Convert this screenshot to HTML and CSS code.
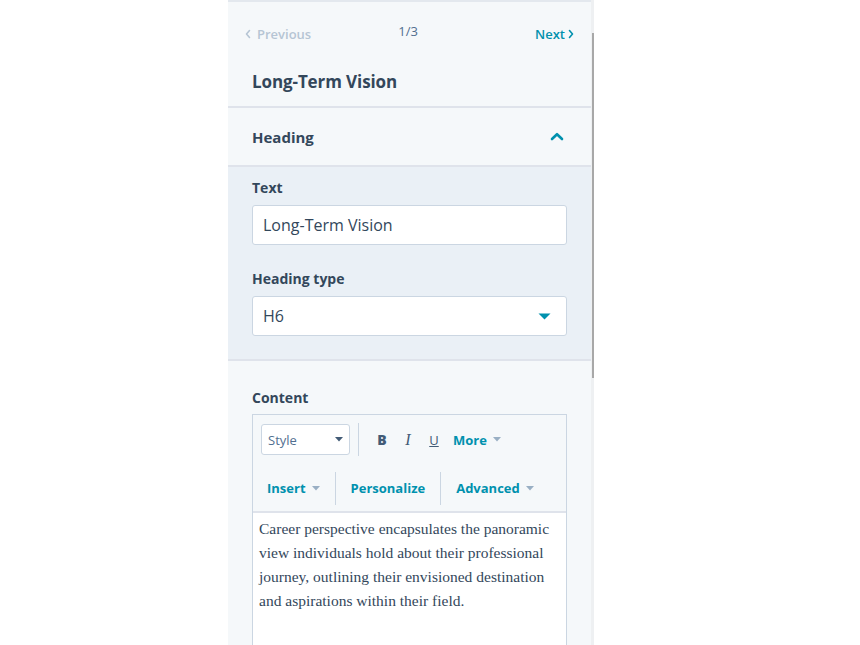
FILE: index.html
```html
<!DOCTYPE html>
<html>
<head>
<meta charset="utf-8">
<link rel="stylesheet" href="styles.css">
</head>
<body>
<div class="frame">
  <aside class="panel">
    <div class="topstrip"></div>
    <header class="head">
      <nav class="pager">
        <span class="prev"><svg width="8" height="10" viewBox="0 0 8 10"><path d="M5.5 1.5 L2.5 5 L5.5 8.5" fill="none" stroke="currentColor" stroke-width="1.6" stroke-linecap="round" stroke-linejoin="round"/></svg>Previous</span>
        <span class="count">1/3</span>
        <span class="next">Next<svg width="8" height="10" viewBox="0 0 8 10"><path d="M2.5 1.5 L5.5 5 L2.5 8.5" fill="none" stroke="currentColor" stroke-width="1.6" stroke-linecap="round" stroke-linejoin="round"/></svg></span>
      </nav>
      <h1 class="title">Long-Term Vision</h1>
    </header>
    <div class="acc-head">
      <span>Heading</span>
      <svg width="14" height="9" viewBox="0 0 14 9"><path d="M2 7 L7 2.2 L12 7" fill="none" stroke="#0091ae" stroke-width="2.6" stroke-linecap="round" stroke-linejoin="round"/></svg>
    </div>
    <div class="acc-body">
      <label class="lbl">Text</label>
      <div class="input">Long-Term Vision</div>
      <label class="lbl second">Heading type</label>
      <div class="input select">H6<svg width="13" height="7" viewBox="0 0 13 7"><path d="M0.5 0.5 H12.5 L6.5 6.5 Z" fill="#0091ae"/></svg></div>
    </div>
    <div class="content-sec">
      <label class="lbl">Content</label>
      <div class="editor">
        <div class="toolbar">
          <div class="tb-row">
            <div class="style-sel">Style<svg width="8" height="5" viewBox="0 0 8 5"><path d="M0 0 H8 L4 4.5 Z" fill="#425b76"/></svg></div>
            <span class="vsep"></span>
            <span class="fmt b">B</span>
            <span class="fmt i">I</span>
            <span class="fmt u">U</span>
            <span class="tbtn more">More<svg width="8" height="5" viewBox="0 0 8 5"><path d="M0 0 H8 L4 4.5 Z" fill="#99afc4"/></svg></span>
          </div>
          <div class="tb-row row2">
            <span class="tbtn first">Insert<svg width="8" height="5" viewBox="0 0 8 5"><path d="M0 0 H8 L4 4.5 Z" fill="#99afc4"/></svg></span>
            <span class="vsep tall"></span>
            <span class="tbtn">Personalize</span>
            <span class="vsep tall"></span>
            <span class="tbtn">Advanced<svg width="8" height="5" viewBox="0 0 8 5"><path d="M0 0 H8 L4 4.5 Z" fill="#99afc4"/></svg></span>
          </div>
        </div>
        <div class="body-text">Career perspective encapsulates the panoramic view individuals hold about their professional journey, outlining their envisioned destination and aspirations within their field.</div>
      </div>
    </div>
  </aside>
  <div class="scroll"><div class="thumb"></div></div>
</div>
</body>
</html>
```
FILE: styles.css
```css
html, body {
  margin: 0;
  padding: 0;
  background: #ffffff;
  height: 645px;
  overflow: hidden;
  font-family: "Open Sans", "Noto Sans", sans-serif;
  color: #33475b;
}
.frame {
  display: flex;
  margin-left: 228px;
  height: 645px;
}
.panel {
  width: 363px;
  background: #f5f8fa;
  display: flex;
  flex-direction: column;
  overflow: hidden;
}
.panel > * {
  flex-shrink: 0;
}
.topstrip {
  height: 2px;
  background: #e3e8ee;
}
.head {
  border-bottom: 2px solid #dfe3eb;
  padding: 0 16px 0 24px;
  height: 106px;
  box-sizing: border-box;
}
.pager {
  display: flex;
  align-items: center;
  justify-content: space-between;
  padding-top: 22px;
  height: 20px;
  font-size: 13px;
  font-weight: 600;
  margin-left: -8px;
}
.prev {
  color: #b6c5d4;
  display: flex;
  align-items: center;
  gap: 5px;
}
.count {
  color: #516f90;
  font-weight: 400;
  font-size: 13px;
  margin-top: -7px;
  margin-left: -30px;
}
.next {
  color: #0091ae;
  display: flex;
  align-items: center;
  gap: 2px;
}
.title {
  margin: 26px 0 0;
  font-size: 17px;
  font-weight: 700;
  line-height: 24px;
  letter-spacing: -0.1px;
}
.acc-head {
  height: 57px;
  border-bottom: 2px solid #dfe3eb;
  display: flex;
  align-items: center;
  justify-content: space-between;
  padding: 0 27px 0 24px;
  font-size: 15px;
  font-weight: 700;
}
.acc-body {
  background: #eaf0f6;
  padding: 11px 24px 23px;
  border-bottom: 2px solid #dfe3eb;
}
.lbl {
  display: block;
  font-size: 14px;
  font-weight: 700;
  line-height: 20px;
  margin-bottom: 7px;
}
.lbl.second {
  margin-top: 24px;
}
.input {
  background: #ffffff;
  border: 1px solid #cbd6e2;
  border-radius: 3px;
  height: 38px;
  padding: 0 10px;
  display: flex;
  align-items: center;
  font-size: 16px;
  color: #33475b;
}
.select {
  justify-content: space-between;
  padding-right: 15px;
}
.content-sec {
  padding: 27px 24px 0;
}
.content-sec .lbl {
  margin-bottom: 6px;
}
.editor {
  border: 1px solid #cbd6e2;
  border-bottom: none;
  background: #ffffff;
  height: 240px;
}
.toolbar {
  background: #f5f8fa;
  border-bottom: 2px solid #dfe3eb;
  padding: 0 8px;
}
.tb-row {
  display: flex;
  align-items: center;
  height: 49px;
  padding-bottom: 1px;
}
.tb-row.row2 {
  height: 46px;
  padding-bottom: 0;
}
.style-sel {
  width: 89px;
  height: 31px;
  box-sizing: border-box;
  background: #ffffff;
  border: 1px solid #cbd6e2;
  border-radius: 3px;
  display: flex;
  align-items: center;
  justify-content: space-between;
  padding: 0 6px;
  font-size: 13px;
  color: #516f90;
}
.vsep {
  width: 1px;
  height: 33px;
  background: #cbd6e2;
  margin: 0 8px;
}
.vsep.tall {
  margin: 0 15px;
}
.fmt {
  width: 26px;
  text-align: center;
  font-size: 14px;
  color: #425b76;
}
.fmt.b {
  font-weight: 800;
  margin-left: 2px;
}
.fmt.i {
  font-family: "Liberation Serif", serif;
  font-style: italic;
  font-size: 16px;
}
.fmt.u {
  text-decoration: underline;
  font-size: 13px;
}
.tbtn {
  display: flex;
  align-items: center;
  gap: 6px;
  font-size: 13px;
  font-weight: 700;
  color: #0091ae;
}
.tbtn.more {
  padding-left: 6px;
}
.tbtn.first {
  padding-left: 6px;
}
.body-text {
  font-family: "Liberation Serif", serif;
  font-size: 15.5px;
  line-height: 24px;
  color: #33475b;
  padding: 4px 6px 0;
}
.scroll {
  width: 3px;
  background: #eef0f2;
  position: relative;
}
.thumb {
  position: absolute;
  left: 1px;
  top: 33px;
  width: 2px;
  height: 345px;
  background: #a8a8a8;
}
```
